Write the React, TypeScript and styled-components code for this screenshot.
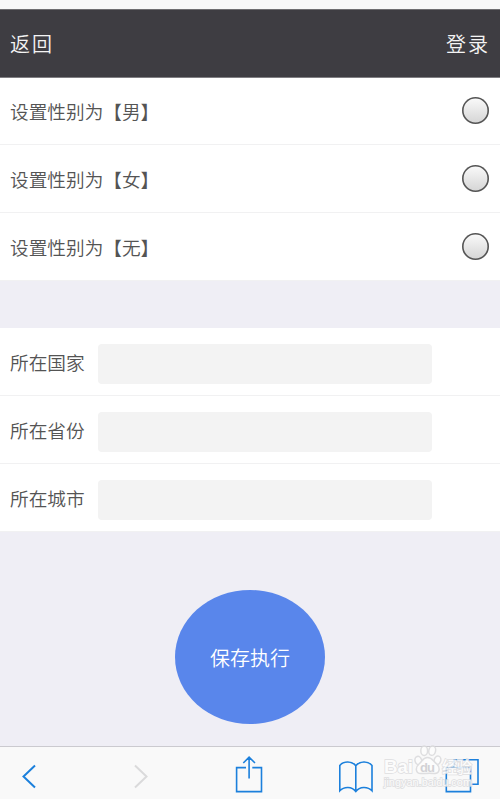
import React from "react";
import styled, { createGlobalStyle } from "styled-components";

const GlobalStyle = createGlobalStyle`
  * { box-sizing: border-box; }
  body {
    margin: 0;
    background: #efeef5;
    font-family: "Noto Sans CJK SC", sans-serif;
  }
`;

const Page = styled.div`
  display: flex;
  flex-direction: column;
  width: 500px;
  height: 799px;
  overflow: hidden;
  background: #efeef5;
`;

const StatusStrip = styled.div`
  flex: none;
  height: 9px;
  background: #f8f8f8;
`;

const Header = styled.header`
  flex: none;
  display: flex;
  justify-content: space-between;
  align-items: center;
  height: 69px;
  padding: 0 10px;
  background: #3e3d42;
  border-top: 1px solid #6f6e71;
  border-bottom: 1px solid #7f7e82;
`;

const HeaderLink = styled.span`
  color: #f4f4f4;
  font-size: 20px;
  font-weight: 350;
  line-height: 30px;
  letter-spacing: 2px;
`;

const Group = styled.section<{ $gap?: number }>`
  flex: none;
  margin-top: ${(p) => p.$gap ?? 0}px;
  background: #fff;
`;

const Row = styled.div<{ $h?: number }>`
  display: flex;
  align-items: center;
  height: ${(p) => p.$h ?? 68}px;
  padding: 0 10px;
  border-bottom: 1px solid #f1f1f2;
`;

const Label = styled.span`
  flex: 1;
  color: #545454;
  font-size: 18.67px;
  font-weight: 350;
  line-height: 28px;
  white-space: nowrap;
`;

const FieldLabel = styled(Label)`
  flex: 0 0 88px;
`;

const Radio = styled.span`
  width: 27px;
  height: 27px;
  margin: -1px 1px 0 0;
  border-radius: 50%;
  background: linear-gradient(#fbfbfb, #d4d4d4);
  box-shadow: inset 0 0 0 1.6px #555;
`;

const Field = styled.input`
  width: 334px;
  height: 40px;
  margin-top: 5px;
  padding: 0 8px;
  border: 0;
  border-radius: 4px;
  background: #f3f3f3;
`;

const Action = styled.main`
  flex: 1;
  display: flex;
  justify-content: center;
  align-items: flex-start;
  padding-top: 59px;
`;

const SaveButton = styled.button`
  width: 150px;
  height: 134px;
  margin-top: -1px;
  padding: 1px 0 0;
  border: 0;
  border-radius: 50%;
  background: #5986eb;
  color: #fff;
  font: 350 20px "Noto Sans CJK SC", sans-serif;
`;

const Toolbar = styled.footer`
  position: relative;
  flex: none;
  display: flex;
  height: 53px;
  padding: 8px 0 0 18px;
  background: #f9f9f9;
  border-top: 1px solid #cbcacf;
`;

const Icon = styled.svg<{ $gap?: number; $muted?: boolean }>`
  flex: none;
  height: 40px;
  margin-left: ${(p) => p.$gap ?? 0}px;
  fill: none;
  stroke: ${(p) => (p.$muted ? "#dadadb" : "#1c80dc")};
  stroke-width: 1.6;
`;

const Watermark = styled.svg`
  position: absolute;
  left: 380px;
  top: -4px;
  font-family: "Liberation Sans", "Noto Sans CJK SC", sans-serif;
`;

const genders = ["男", "女", "无"];
const places = ["所在国家", "所在省份", "所在城市"];

export default function App() {
  return (
    <Page>
      <GlobalStyle />
      <StatusStrip />
      <Header>
        <HeaderLink>返回</HeaderLink>
        <HeaderLink>登录</HeaderLink>
      </Header>
      <Group>
        {genders.map((g, i) => (
          <Row key={g} $h={i === 0 ? 67 : 68}>
            <Label>{`设置性别为【${g}】`}</Label>
            <Radio />
          </Row>
        ))}
      </Group>
      <Group $gap={47}>
        {places.map((p) => (
          <Row key={p}>
            <FieldLabel>{p}</FieldLabel>
            <Field aria-label={p} />
          </Row>
        ))}
      </Group>
      <Action>
        <SaveButton>保存执行</SaveButton>
      </Action>
      <Toolbar>
        <Icon width="22" height="40" viewBox="18 755 22 40">
          <path d="M35 765.5 23.5 776.5 35 787.5" strokeWidth="2" />
        </Icon>
        <Icon $gap={90} $muted width="22" height="40" viewBox="130 755 22 40">
          <path d="M135 765.5 146.5 776.5 135 787.5" strokeWidth="2" />
        </Icon>
        <Icon $gap={82} width="30" height="40" viewBox="234 755 30 40">
          <path d="M246 767.6H236.6V791.6H261.5V767.6H252.3M249.1 778.5V757.5M243.3 763 249.1 757.2 255 763" />
        </Icon>
        <Icon $gap={74} width="36" height="40" viewBox="338 755 36 40">
          <path d="M355.8 765.8C352 760.7 343.5 760.7 339.8 765.5V790.8C344 786.2 352 786.2 355.8 791.5C359.6 786.2 367.8 786.2 372 790.8V765.5C368 760.7 359.8 760.7 355.8 765.8V792" />
        </Icon>
        <Icon $gap={70} width="36" height="40" viewBox="444 755 36 40">
          <path d="M446.3 767.5H470.5V791.6H446.3ZM454.2 767V759.7H478V784.3H471" />
        </Icon>
        <Watermark width="100" height="52" viewBox="380 743 100 52" aria-hidden="true">
          <g fill="#fdfdfd" stroke="#dadadc" strokeWidth="1.5" opacity="0.85">
            <text x="384" y="773" fontSize="19" fontWeight="700" textLength="29" lengthAdjust="spacingAndGlyphs" paintOrder="stroke">Bai</text>
            <ellipse cx="418.3" cy="760.5" rx="3.3" ry="4.2" transform="rotate(-15 418.3 760.5)" />
            <ellipse cx="424.2" cy="750.7" rx="3.4" ry="4.7" />
            <ellipse cx="432.2" cy="750.7" rx="3.4" ry="4.7" transform="rotate(12 432.2 750.7)" />
            <ellipse cx="437.5" cy="760.2" rx="3.3" ry="4.2" transform="rotate(15 437.5 760.2)" />
            <path d="M427.5 757.5C423 757.5 422.5 761 419 764C415 767.5 415.5 773.6 421 773.6C424.5 773.6 430 773 434 773.6C440 774 440.5 767.5 436.5 763.8C433 761 432 757.5 427.5 757.5Z" />
            <text x="442" y="773" fontSize="15.5" fontWeight="500" textLength="30" paintOrder="stroke">经验</text>
            <text x="384" y="785.5" fontSize="10" textLength="88" lengthAdjust="spacingAndGlyphs" paintOrder="stroke">jingyan.baidu.com</text>
          </g>
          <text x="420" y="772" fontSize="13" fontWeight="700" fill="#d2d2d5" textLength="15">du</text>
        </Watermark>
      </Toolbar>
    </Page>
  );
}
